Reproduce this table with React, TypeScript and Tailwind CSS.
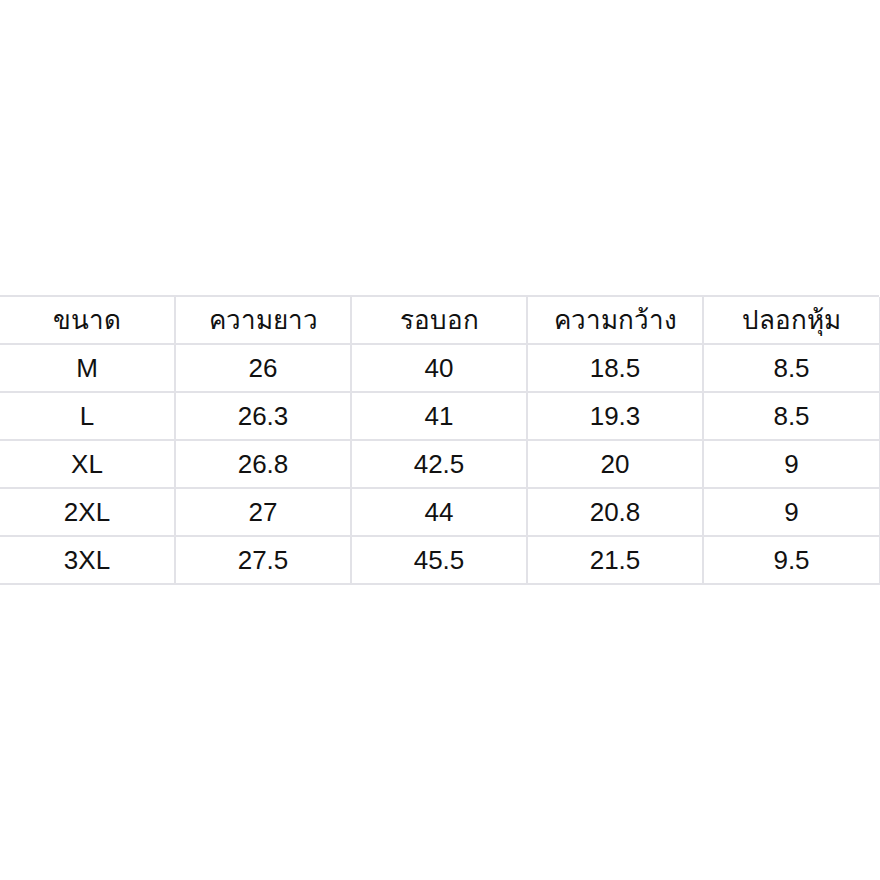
import React from "react";

const header = ["ขนาด", "ความยาว", "รอบอก", "ความกว้าง", "ปลอกหุ้ม"];
const rows = [
  ["M", "26", "40", "18.5", "8.5"],
  ["L", "26.3", "41", "19.3", "8.5"],
  ["XL", "26.8", "42.5", "20", "9"],
  ["2XL", "27", "44", "20.8", "9"],
  ["3XL", "27.5", "45.5", "21.5", "9.5"],
];

export default function App() {
  const all = [header, ...rows];
  return (
    <div
      className="w-[880px] h-[880px] bg-white overflow-hidden pt-[295px]"
      style={{ fontFamily: '"Liberation Sans", Arial, "Noto Sans", sans-serif' }}
    >
      <div className="ml-[-2px] w-[881px] grid grid-cols-[176px_176px_176px_176px_177px] border-t-2 border-l-2 border-[#e2e2e7]">
        {all.map((r, i) =>
          r.map((c, j) => (
            <div
              key={`${i}-${j}`}
              className="h-[48px] border-r-2 border-b-2 border-[#e2e2e7] flex items-center justify-center text-[26px] text-[#111111]"
            >
              {c}
            </div>
          ))
        )}
      </div>
    </div>
  );
}
